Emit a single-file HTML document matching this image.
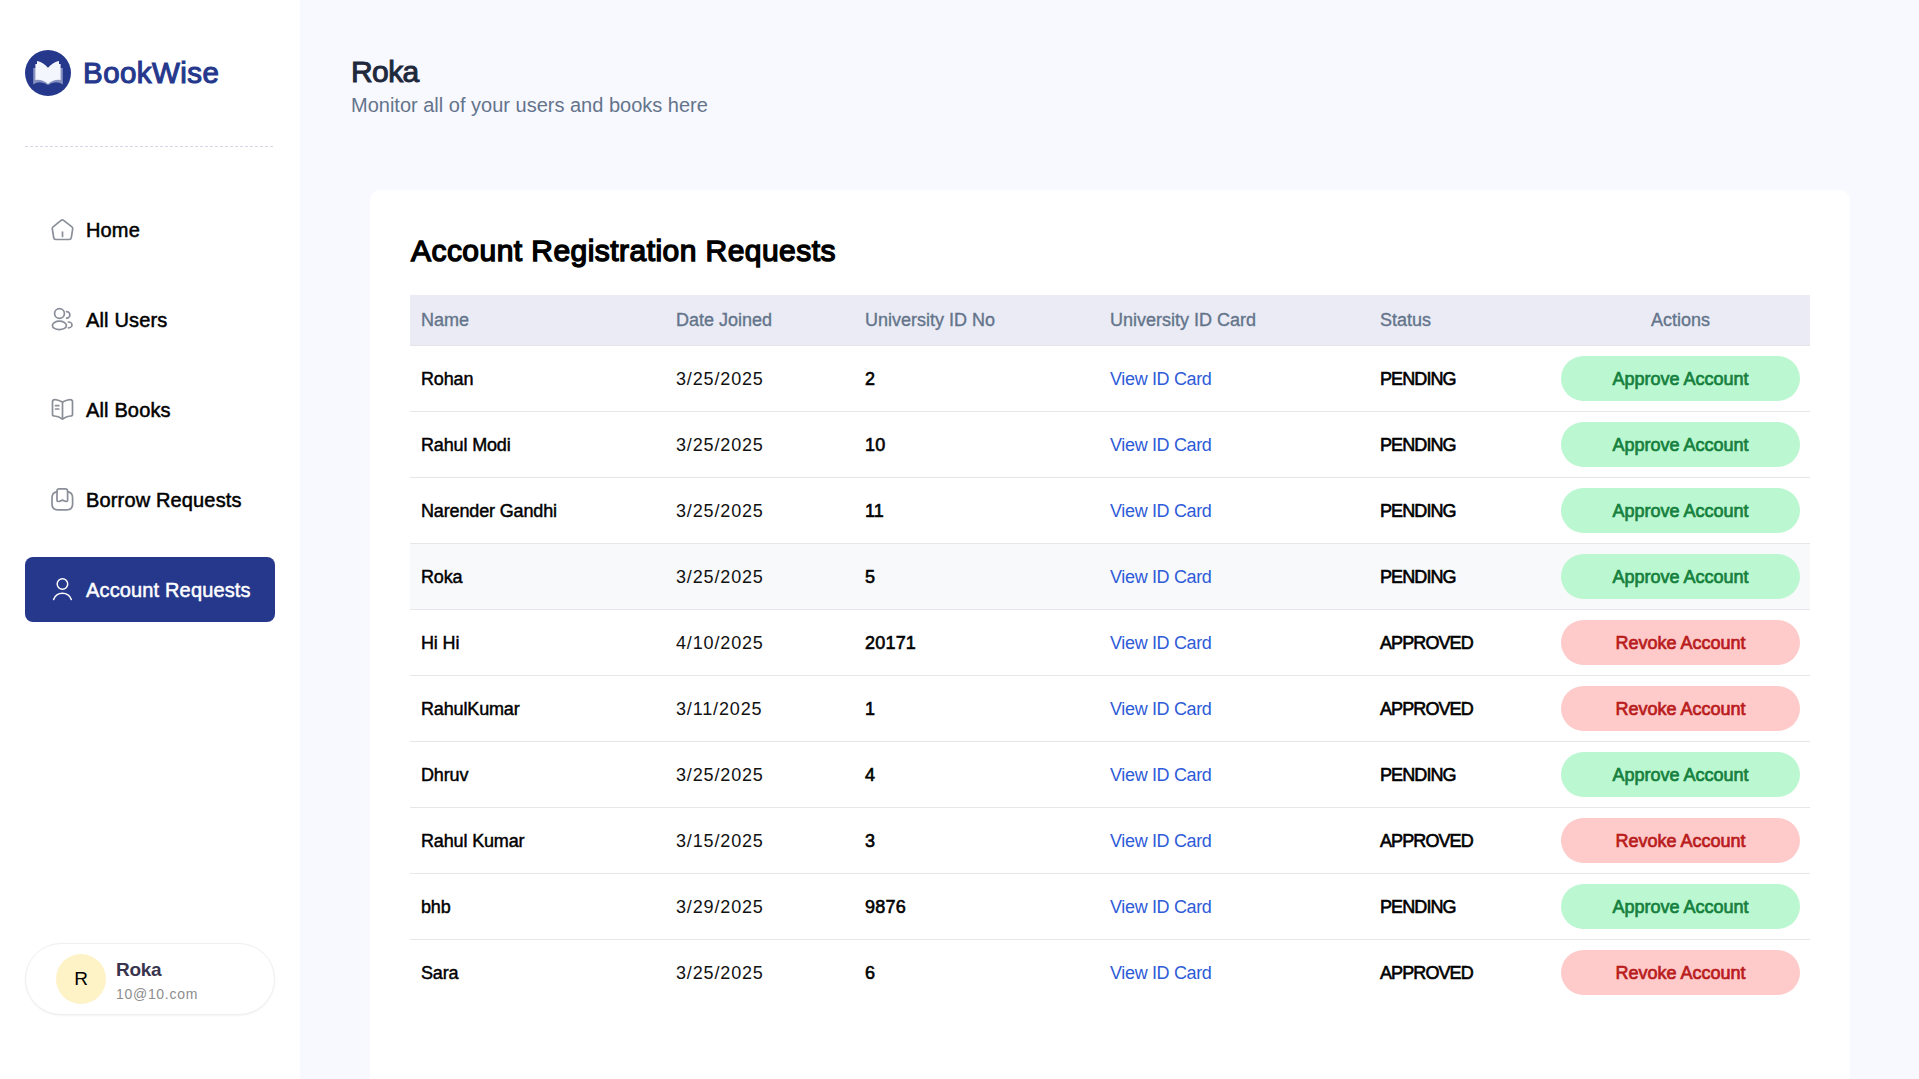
<!DOCTYPE html>
<html>
<head>
<meta charset="utf-8">
<style>
*{box-sizing:border-box;margin:0;padding:0}
html,body{width:1919px;height:1079px;overflow:hidden}
body{background:#F8F8FF;font-family:"Liberation Sans",sans-serif;position:relative;color:#000}
.abs{position:absolute}
#sidebar{position:absolute;left:0;top:0;width:300px;height:1079px;background:#fff}
#logo{left:25px;top:50px;width:46px;height:46px;border-radius:50%;background:#25388C}
#logo svg{display:block}
#brand{left:83px;top:53px;font-size:29.5px;line-height:40px;font-weight:400;color:#25388C;letter-spacing:0.45px;white-space:nowrap;-webkit-text-stroke:1.1px #25388C}
#divider{left:25px;top:146px;width:250px;height:1px;background:repeating-linear-gradient(90deg,#D3D7E8 0 3px,transparent 3px 5px)}
.nav{position:absolute;left:25px;width:250px;height:65px;border-radius:8px}
.nav svg{position:absolute;left:25px;top:20px;width:24px;height:24px;overflow:visible}
.nav span{position:absolute;left:61px;top:22px;font-size:20px;line-height:22px;font-weight:400;white-space:nowrap;color:#000;letter-spacing:0.15px;-webkit-text-stroke:0.5px #000}
.nav.active span{-webkit-text-stroke:0.5px #fff}
.nav.active{background:#25388C}
.nav.active span{color:#fff}
#user{left:25px;top:943px;width:250px;height:72px;border-radius:9999px;border:1px solid #EDF1F1;background:#fff;box-shadow:0 1px 2px rgba(0,0,0,0.05)}
#avatar{left:30px;top:10px;width:50px;height:50px;border-radius:50%;background:#FEF3C7;font-size:19px;line-height:50px;text-align:center;color:#000}
#uname{left:90px;top:15px;font-size:19px;line-height:22px;font-weight:700;color:#3A354E;letter-spacing:-0.3px}
#umail{left:90px;top:41px;font-size:14px;line-height:18px;color:#8D8D8D;letter-spacing:0.7px}

#h1{left:351px;top:56px;font-size:30px;line-height:32px;font-weight:400;color:#1E293B;letter-spacing:-0.6px;-webkit-text-stroke:1px #1E293B}
#sub{left:351px;top:94px;font-size:20px;line-height:22px;color:#64748B}
#card{left:370px;top:190px;width:1480px;height:1000px;background:#fff;border-radius:10px}
#title{left:411px;top:235px;font-size:30px;line-height:32px;font-weight:400;color:#000;letter-spacing:0.45px;white-space:nowrap;-webkit-text-stroke:1.4px #000}

#table{left:410px;top:295px;width:1400px}
.row{position:relative;height:66px;border-bottom:1px solid #E5E7EB}
.row.last{border-bottom:none;height:65px}
.row.hl{background:#F8F9FB}
.hdr{position:relative;height:51px;background:#EAEBF4;border-bottom:1px solid #E3E5EA}
.c{position:absolute;top:0;height:100%;display:flex;align-items:center;white-space:nowrap;font-size:18px}
.c1{left:11px}.c2{left:266px}.c3{left:455px}.c4{left:700px}.c5{left:970px}.c6{left:1151px;width:239px;justify-content:center}
.hdr .c{color:#64748B;font-size:18px;-webkit-text-stroke:0.35px #64748B}
.nm{font-weight:400;color:#000;letter-spacing:-0.15px;-webkit-text-stroke:0.45px #000}
.row .c{padding-top:2px}
.row .c6{padding-top:0}
.dt{color:#111;letter-spacing:0.85px}
.id{font-weight:400;color:#000;letter-spacing:0.2px;-webkit-text-stroke:0.6px #000}
.lnk{color:#2E5BD8;letter-spacing:-0.35px}
.st{font-weight:400;color:#000;letter-spacing:-0.9px;-webkit-text-stroke:0.6px #000}
.btn{width:239px;height:45px;border-radius:9999px;display:flex;align-items:center;justify-content:center;font-weight:400;font-size:18px;letter-spacing:0px;padding-top:2px}
.ap{-webkit-text-stroke:0.7px #15803D}.rv{-webkit-text-stroke:0.7px #B91C1C}
.ap{background:#BBF7D0;color:#15803D}
.rv{background:#FECACA;color:#B91C1C}
</style>
</head>
<body>
<div id="sidebar">
  <div id="logo" class="abs">
    <svg width="46" height="46" viewBox="0 0 46 46">
      <path d="M8.2,18 V34.5 Q15,30 23,35 Q31,30 37.8,34.5 V18 Z" fill="rgba(255,255,255,0.45)"/>
      <path d="M10.4,14 H12 V11 Q18,12 23,17.8 Q28,12 34,11 V14 H35.6 V30 Q29,29 23,34 Q17,29 10.4,30 Z" fill="#F3F6FD"/>
    </svg>
  </div>
  <div id="brand" class="abs">BookWise</div>
  <div id="divider" class="abs"></div>

  <div class="nav" style="top:197px">
    <svg viewBox="0 0 24 24" style="top:20px"><g fill="none" stroke="#8A8E98" stroke-width="1.7" stroke-linejoin="round" stroke-linecap="round">
      <path d="M11.1,3.4 Q12.4,2.4 13.6,3.4 L21.9,9.8 Q22.9,10.6 22.7,11.8 L21.3,20.7 Q21,22.5 19.2,22.5 L5.8,22.5 Q4,22.5 3.7,20.7 L2.3,11.8 Q2.1,10.6 3.1,9.8 Z"/><path d="M12.5,15 V19.5"/></g></svg>
    <span>Home</span>
  </div>
  <div class="nav" style="top:287px">
    <svg viewBox="0 0 24 24" style="top:13px"><g fill="none" stroke="#8A8E98" stroke-width="1.7" stroke-linecap="round">
      <circle cx="9.5" cy="13.5" r="4.9"/><ellipse cx="9.4" cy="25.4" rx="7" ry="4.2"/>
      <path d="M16.6,11.6 A3.3,3.3 0 0 1 16.6,18.2"/><path d="M18.4,22 A3.6,2.9 0 0 1 18.4,27.8"/></g></svg>
    <span>All Users</span>
  </div>
  <div class="nav" style="top:377px">
    <svg viewBox="0 0 24 24" style="top:13px"><g fill="none" stroke="#8A8E98" stroke-width="1.7" stroke-linejoin="round" stroke-linecap="round">
      <path d="M12.5,12 Q7,9.2 4.5,9.6 Q2.5,9.8 2.5,11.8 V24.5 Q2.5,26 4.5,26 Q8,26 12.5,29 Q17,26 20.5,26 Q22.5,26 22.5,24.5 V11.8 Q22.5,9.8 20.5,9.6 Q18,9.2 12.5,12 Z"/>
      <path d="M12.5,12 V29"/><path d="M5.5,15.7 H8.8 M5.5,19 H8.8"/></g></svg>
    <span>All Books</span>
  </div>
  <div class="nav" style="top:467px">
    <svg viewBox="0 0 24 24" style="top:20px"><g fill="none" stroke="#8A8E98" stroke-width="1.7" stroke-linejoin="round" stroke-linecap="round">
      <path d="M7,4.8 Q2,5 2,11 V17 Q2,22.8 8,22.8 H16.6 Q22.6,22.8 22.6,17 V11 Q22.6,5 17.6,4.8"/>
      <path d="M7,13.5 V4 Q7,1.9 9.5,1.9 H15.1 Q17.6,1.9 17.6,4 V13.5 Q17.6,14.5 15.8,14.5 L12.4,13.1 L9.2,14.5 Q7,14.5 7,13.5 Z"/></g></svg>
    <span>Borrow Requests</span>
  </div>
  <div class="nav active" style="top:557px">
    <svg viewBox="0 0 24 24" style="top:15px"><g fill="none" stroke="#fff" stroke-width="1.5" stroke-linecap="round">
      <circle cx="12.45" cy="12" r="5.25"/><path d="M3.6,27.5 A9.4,9.4 0 0 1 21.3,27.5"/></g></svg>
    <span>Account Requests</span>
  </div>

  <div id="user" class="abs">
    <div id="avatar" class="abs">R</div>
    <div id="uname" class="abs">Roka</div>
    <div id="umail" class="abs">10@10.com</div>
  </div>
</div>

<div id="h1" class="abs">Roka</div>
<div id="sub" class="abs">Monitor all of your users and books here</div>
<div id="card" class="abs"></div>
<div id="title" class="abs">Account Registration Requests</div>

<div id="table" class="abs">
  <div class="hdr">
    <div class="c c1">Name</div><div class="c c2">Date Joined</div><div class="c c3">University ID No</div><div class="c c4">University ID Card</div><div class="c c5">Status</div><div class="c c6">Actions</div>
  </div>
  <div class="row"><div class="c c1 nm">Rohan</div><div class="c c2 dt">3/25/2025</div><div class="c c3 id">2</div><div class="c c4 lnk">View ID Card</div><div class="c c5 st">PENDING</div><div class="c c6"><div class="btn ap">Approve Account</div></div></div>
  <div class="row"><div class="c c1 nm">Rahul Modi</div><div class="c c2 dt">3/25/2025</div><div class="c c3 id">10</div><div class="c c4 lnk">View ID Card</div><div class="c c5 st">PENDING</div><div class="c c6"><div class="btn ap">Approve Account</div></div></div>
  <div class="row"><div class="c c1 nm">Narender Gandhi</div><div class="c c2 dt">3/25/2025</div><div class="c c3 id">11</div><div class="c c4 lnk">View ID Card</div><div class="c c5 st">PENDING</div><div class="c c6"><div class="btn ap">Approve Account</div></div></div>
  <div class="row hl"><div class="c c1 nm">Roka</div><div class="c c2 dt">3/25/2025</div><div class="c c3 id">5</div><div class="c c4 lnk">View ID Card</div><div class="c c5 st">PENDING</div><div class="c c6"><div class="btn ap">Approve Account</div></div></div>
  <div class="row"><div class="c c1 nm">Hi Hi</div><div class="c c2 dt">4/10/2025</div><div class="c c3 id">20171</div><div class="c c4 lnk">View ID Card</div><div class="c c5 st">APPROVED</div><div class="c c6"><div class="btn rv">Revoke Account</div></div></div>
  <div class="row"><div class="c c1 nm">RahulKumar</div><div class="c c2 dt">3/11/2025</div><div class="c c3 id">1</div><div class="c c4 lnk">View ID Card</div><div class="c c5 st">APPROVED</div><div class="c c6"><div class="btn rv">Revoke Account</div></div></div>
  <div class="row"><div class="c c1 nm">Dhruv</div><div class="c c2 dt">3/25/2025</div><div class="c c3 id">4</div><div class="c c4 lnk">View ID Card</div><div class="c c5 st">PENDING</div><div class="c c6"><div class="btn ap">Approve Account</div></div></div>
  <div class="row"><div class="c c1 nm">Rahul Kumar</div><div class="c c2 dt">3/15/2025</div><div class="c c3 id">3</div><div class="c c4 lnk">View ID Card</div><div class="c c5 st">APPROVED</div><div class="c c6"><div class="btn rv">Revoke Account</div></div></div>
  <div class="row"><div class="c c1 nm">bhb</div><div class="c c2 dt">3/29/2025</div><div class="c c3 id">9876</div><div class="c c4 lnk">View ID Card</div><div class="c c5 st">PENDING</div><div class="c c6"><div class="btn ap">Approve Account</div></div></div>
  <div class="row last"><div class="c c1 nm">Sara</div><div class="c c2 dt">3/25/2025</div><div class="c c3 id">6</div><div class="c c4 lnk">View ID Card</div><div class="c c5 st">APPROVED</div><div class="c c6"><div class="btn rv">Revoke Account</div></div></div>
</div>
</body>
</html>
